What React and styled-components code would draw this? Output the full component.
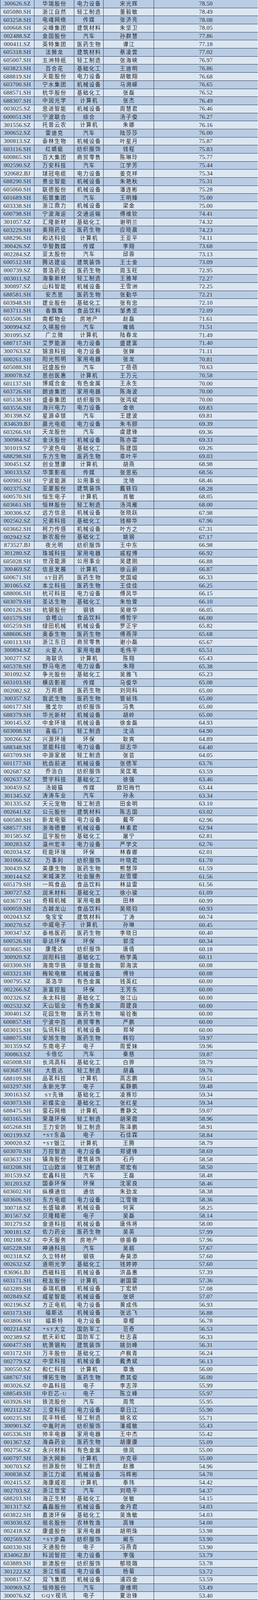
import React from "react";
import styled, { createGlobalStyle } from "styled-components";

const GlobalStyle = createGlobalStyle`
  html, body {
    margin: 0;
    padding: 0;
    background: #ffffff;
  }
`;

const ROW_COUNT = 198;

// the sheet fills the window height, every row gets an equal share
const Table = styled.div`
  width: 660px;
  height: 100vh;
  display: grid;
  grid-template-rows: repeat(${ROW_COUNT}, minmax(0, 1fr));
  color: #262a30;
  overflow: hidden;
`;

const Row = styled.div`
  display: grid;
  grid-template-columns: 87px 102px 75px 129px 1fr;
  box-sizing: border-box;
  min-height: 0;
  background: ${(p) => (p.$dark ? "#b8cce4" : "#dce6f1")};
  border-left: 1px solid #2b3a50;
  border-right: 1px solid #f2f6fb;
  border-bottom: 1px solid #2b3a50;
`;

const Cell = styled.div`
  display: flex;
  align-items: center;
  justify-content: center;
  overflow: hidden;
  white-space: nowrap;
  min-height: 0;
  line-height: 1;
  border-right: ${(p) => (p.$last ? "none" : "1px solid #2b3a50")};
`;

const NumText = styled.span`
  font-family: "Liberation Serif", "Noto Sans CJK SC", serif;
  font-size: 15px;
  letter-spacing: 0.3px;
  line-height: 1;
`;

const CnText = styled.span`
  font-family: "Liberation Serif", "Noto Sans CJK SC", serif;
  font-size: 13.5px;
  letter-spacing: 2px;
  padding-left: 2px;
  line-height: 1;
`;

const raw = `
300626.SZ 华瑞股份 电力设备 宋光辉 78.50
605080.SH 浙江自然 轻工制造 董毅敏 78.49
603258.SH 电魂网络 传媒 张济亮 78.08
600668.SH 尖峰集团 建筑材料 朱坚卫 78.05
002488.SZ 金固股份 汽车 孙群慧 77.86
000411.SZ 英特集团 医药生物 谭江 77.18
605318.SH 法狮龙 建筑材料 蔡凌雲 77.02
605007.SH 五洲特纸 轻工制造 张海峡 76.97
603823.SH 百合花 基础化工 王迪明 76.86
688819.SH 天能股份 电力设备 胡敏翔 76.68
603700.SH 宁水集团 机械设备 马溯嵘 76.65
688571.SH 杭华股份 基础化工 张磊 76.52
688307.SH 中润光学 计算机 张杰 76.49
003025.SZ 思进智能 机械设备 周慧君 76.46
600051.SH 宁波联合 综合 汤子俊 76.27
301556.SZ 托普云农 计算机 朱娜 76.16
300652.SZ 雷迪克 汽车 陆莎莎 76.00
300813.SZ 泰林生物 机械设备 叶星月 75.87
603116.SH 红蜻蜓 纺织服饰 钱程 75.83
600865.SH 百大集团 商贸零售 陈琳玲 75.77
002590.SZ 万安科技 汽车 江学芳 75.44
920682.BJ 球冠电缆 电力设备 姜克祥 75.34
688290.SH 景业智能 机械设备 朱艳秋 75.31
605060.SH 联德股份 机械设备 潘连彬 75.28
601689.SH 拓普集团 汽车 王明臻 75.00
603338.SH 浙江鼎力 机械设备 梁金 75.00
600798.SH 宁波海运 交通运输 傅维钦 74.41
301057.SZ 汇隆新材 基础化工 谢明兰 74.32
603229.SH 奥翔药业 医药生物 应晓晨 74.23
688296.SH 和达科技 计算机 王亚平 74.11
300426.SZ 华智数媒 传媒 李翔 73.68
002284.SZ 亚太股份 汽车 邱蓉 73.13
600512.SH 腾达建设 建筑装饰 王士金 73.09
000739.SZ 普洛药业 医药生物 周玉旺 72.95
003011.SZ 海象新材 轻工制造 王雅琴 72.27
300897.SZ 山科智能 机械设备 王雪洲 72.25
688581.SH 安杰思 医药生物 张勤华 72.21
603948.SH 建业股份 基础化工 张有忠 72.10
603711.SH 香飘飘 食品饮料 邹勇坚 72.09
603506.SH 南都物业 房地产 赵磊 71.61
300994.SZ 久祺股份 汽车 雍嫣 71.51
301095.SZ 广立微 计算机 陆春龙 71.49
688717.SH 艾罗能源 电力设备 盛建富 71.40
300763.SZ 锦浪科技 电力设备 张婵 71.11
600261.SH 阳光照明 家用电器 张龙 70.81
605088.SH 冠盛股份 汽车 丁蓓蓓 70.63
300078.SZ 思创医惠 计算机 王万元 70.58
601137.SH 博威合金 有色金属 王永生 70.00
603726.SH 朗迪集团 家用电器 陈海波 70.00
605138.SH 盛泰集团 纺织服饰 张鸿斌 70.00
603556.SH 海兴电力 电力设备 金依 69.83
301398.SZ 星源卓镁 汽车 王建波 69.81
834639.BJ 晨光电缆 电力设备 朱韦颐 69.39
603266.SH 天龙股份 汽车 虞建锋 69.36
300984.SZ 金沃股份 机械设备 陈亦霏 69.33
301019.SZ 宁波色母 基础化工 陈建国 69.26
688298.SH 东方生物 医药生物 章叶平 69.03
300451.SZ 创业慧康 计算机 胡燕 68.98
300133.SZ 华策影视 传媒 张思拓 68.56
600982.SH 宁波能源 公用事业 沈琦 68.46
002375.SZ 亚厦股份 建筑装饰 戴轶钧 68.28
600570.SH 恒生电子 计算机 肖敏 68.05
603661.SH 恒林股份 轻工制造 汤鸿雁 68.00
300306.SZ 远方信息 机械设备 张晓跃 67.98
002562.SZ 兄弟科技 基础化工 钱柳华 67.96
603662.SH 柯力传感 机械设备 叶方之 67.31
002942.SZ 新农股份 基础化工 姚钢 67.17
873527.BJ 夜光明 纺织服饰 王中东 66.98
301280.SZ 珠城科技 家用电器 戚程博 66.92
605028.SH 世茂能源 公用事业 吴建刚 66.88
300469.SZ 信息发展 计算机 徐云蔚 66.87
600671.SH ST目药 医药生物 党国峻 66.33
301065.SZ 本立科技 医药生物 王佳佳 66.25
688006.SH 杭可科技 电力设备 傅风华 66.15
603079.SH 圣达生物 基础化工 朱怡萱 66.10
600126.SH 杭钢股份 钢铁 吴继华 66.05
601579.SH 会稽山 食品饮料 傅哲宇 66.00
605259.SH 绿田机械 机械设备 罗正宇 65.82
688606.SH 奥泰生物 医药生物 傅燕萍 65.68
600113.SH 浙江东日 商贸零售 谢小磊 65.67
300894.SZ 火星人 家用电器 毛伟平 65.51
300277.SZ 海联讯 计算机 陈翔 65.43
605378.SH 野马电池 电力设备 朱翔 65.38
301092.SZ 争光股份 基础化工 吴雅飞 65.23
603103.SH 横店影视 传媒 马俊华 65.08
002082.SZ 万邦德 医药生物 刘同科 65.00
300357.SZ 我武生物 医药生物 管祯玮 65.00
600177.SH 雅戈尔 纺织服饰 冯隽 65.00
688379.SH 华光新材 机械设备 胡岭 65.00
300145.SZ 中金环境 机械设备 徐金磊 64.93
603008.SH 喜临门 轻工制造 沈洁 64.90
300266.SZ 兴源环境 环保 耿爽 64.89
688348.SH 昱能科技 电力设备 邱志华 64.40
603709.SH 中源家居 轻工制造 张芸 64.05
601177.SH 杭齿前进 机械设备 张德军 63.76
002687.SZ 乔治白 纺织服饰 吴匡笔 63.59
002637.SZ 赞宇科技 基础化工 徐强 63.46
300459.SZ 汤姆猫 传媒 欧阳梅竹 63.44
301345.SZ 涛涛车业 汽车 孙永 63.34
301335.SZ 天元宠物 轻工制造 田金明 63.10
002641.SZ 公元股份 建筑材料 陈志国 63.02
600580.SH 卧龙电驱 电力设备 戴芩 62.96
688577.SH 浙海德曼 机械设备 林素君 62.94
301585.SZ 蓝宇股份 基础化工 屠宁 62.81
300283.SZ 温州宏丰 电力设备 严学文 62.76
002034.SZ 旺能环境 环保 林春娜 62.01
301066.SZ 万事利 纺织服饰 叶晓君 61.70
300439.SZ 美康生物 医药生物 熊慧萍 61.59
300144.SZ 宋城演艺 社会服务 赵雪璎 61.56
605179.SH 一鸣食品 食品饮料 林益雷 61.56
300727.SZ 润禾材料 基础化工 徐小骏 61.09
603677.SH 奇精机械 家用电器 田林 60.99
600059.SH 古越龙山 食品饮料 吴晓钧 60.93
002043.SZ 兔宝宝 建筑材料 丁涛 60.74
300270.SZ 中威电子 计算机 孙琳 60.45
300347.SZ 泰格医药 医药生物 李晓日 60.40
600526.SH 菲达环保 环保 郭滢 60.34
603665.SH 康隆达 纺织服饰 唐倩 60.18
300920.SZ 润阳科技 基础化工 杨学禹 60.11
603300.SH 海南华铁 非银金融 郭海滨 60.08
603321.SH 梅轮电梯 机械设备 傅铃 60.08
000795.SZ 英洛华 有色金属 钱英红 60.00
002266.SZ 浙富控股 环保 王芳东 60.00
002326.SZ 永太科技 基础化工 张江山 60.00
002532.SZ 天山铝业 有色金属 周建良 60.00
300401.SZ 花园生物 医药生物 喻铨衡 60.00
600857.SH 宁波中百 商贸零售 严鹏 60.00
603015.SH 弘讯科技 机械设备 郑琴 60.00
688075.SH 安旭生物 医药生物 韩钧 59.97
301359.SZ 东南电子 电子 周爱妹 59.96
300863.SZ 卡倍亿 汽车 秦慈 59.87
605008.SH 长鸿高科 基础化工 白骅 59.79
603687.SH 大胜达 轻工制造 胡鑫 59.76
688109.SH 品茗科技 计算机 高志鹏 59.51
603297.SH 永新光学 电子 奚静鹏 59.48
300163.SZ ST先锋 基础化工 凌赛珍 59.34
603073.SH 彩蝶实业 基础化工 张红星 59.34
688475.SH 萤石网络 计算机 曹静文 59.07
603165.SH 荣晟环保 轻工制造 胡荣霞 58.96
605268.SH 王力安防 轻工制造 陈泽鹏 58.91
002199.SZ *ST东晶 电子 石佳霖 58.84
300020.SZ *ST银江 计算机 王腾 58.79
603070.SH 万控智造 电力设备 郑键锋 58.69
603637.SH 镇海股份 建筑装饰 石丹 58.58
603208.SH 江山欧派 轻工制造 郑宏有 58.50
301539.SZ 宏鑫科技 汽车 王磊 58.48
301203.SZ 国泰环保 环保 沈家良 58.46
603602.SH 纵横通信 通信 朱劲龙 58.38
603606.SH 东方电缆 电力设备 江雪微 58.36
300718.SZ 长盛轴承 机械设备 何寅 58.25
301567.SZ 贝隆精密 电子 吴磊 58.14
301279.SZ 金道科技 机械设备 唐伟将 58.00
300181.SZ 佐力药业 医药生物 吴英 57.99
002188.SZ 中天服务 房地产 徐振春 57.96
605228.SH 神通科技 汽车 吴超 57.67
002318.SZ 久立特材 钢铁 寿昊添 57.60
002632.SZ 道明光学 基础化工 钱婷婷 57.60
836961.BJ 西磁科技 机械设备 洪晶惠 57.39
603171.SH 税友股份 计算机 谢国雷 57.36
603289.SH 泰瑞机器 机械设备 丁宏娇 57.08
002849.SZ 威星智能 机械设备 张妍 57.07
002196.SZ 方正电机 电力设备 黄成伟 56.93
603173.SH 福斯达 机械设备 张远飞 56.88
603806.SH 福斯特 电力设备 章樱 56.78
002214.SZ *ST大立 国防军工 范奇 56.53
002389.SZ 航天彩虹 国防军工 杜志喜 56.33
600477.SH 杭萧钢构 建筑装饰 姚剑峰 56.31
603172.SH 万丰股份 基础化工 卢枫青 56.24
002779.SZ 中坚科技 机械设备 戴勇斌 56.13
300550.SZ 和仁科技 计算机 章逸 56.00
688767.SH 博拓生物 医药生物 费其俊 56.00
003026.SZ 中晶科技 电子 李志萍 55.99
688549.SH 中巨芯-U 电子 陈立峰 55.97
603926.SH 铁流股份 汽车 周莺 55.95
002112.SZ 三变科技 电力设备 章日江 55.90
600235.SH 民丰特纸 轻工制造 姚名欢 55.71
300901.SZ 中胤时尚 纺织服饰 潘威敏 55.43
605336.SH 帅丰电器 家用电器 王中杰 55.42
001367.SZ 海森药业 医药生物 胡康康 55.09
002756.SZ 永兴材料 有色金属 徐凤 55.00
600797.SH 浙大网新 计算机 许克菲 55.00
300703.SZ 创源股份 轻工制造 赵雅 54.96
300838.SZ 浙江力诺 机械设备 冯辉彬 54.70
002415.SZ 海康威视 计算机 奉玮 54.42
002703.SZ 浙江世宝 汽车 刘晓平 54.37
688203.SH 海正生材 基础化工 张敏 54.15
301317.SZ 鑫磊股份 机械设备 金丹君 54.03
603822.SH 嘉澳环保 基础化工 吴逸敏 54.03
003030.SZ 祖名股份 农林牧渔 高锋 54.00
002418.SZ 康盛股份 家用电器 胡明珠 53.98
002569.SZ *ST步森 纺织服饰 阚东 53.90
600330.SH 天通股份 电子 冯燕青 53.90
834062.BJ 科润智控 电力设备 李强 53.79
603889.SH 新澳股份 纺织服饰 郁晓璐 53.78
301222.SZ 浙江恒威 电力设备 杨菊 53.72
300817.SZ 双飞集团 机械设备 浦四金 53.59
300969.SZ 恒帅股份 汽车 廖维明 53.49
300076.SZ GQY视讯 电子 夏治锋 53.40
`;

const rows = raw
  .trim()
  .split("\n")
  .map((line) => line.trim().split(/\s+/));

const App = () => {
  return (
    <>
      <GlobalStyle />
      <Table>
        {rows.map(([code, name, industry, person, score], i) => (
          <Row key={code + i} $dark={i % 2 === 0}>
            <Cell>
              <NumText>{code}</NumText>
            </Cell>
            <Cell>
              <CnText>{name}</CnText>
            </Cell>
            <Cell>
              <CnText>{industry}</CnText>
            </Cell>
            <Cell>
              <CnText>{person}</CnText>
            </Cell>
            <Cell $last>
              <NumText>{score}</NumText>
            </Cell>
          </Row>
        ))}
      </Table>
    </>
  );
};

export default App;
